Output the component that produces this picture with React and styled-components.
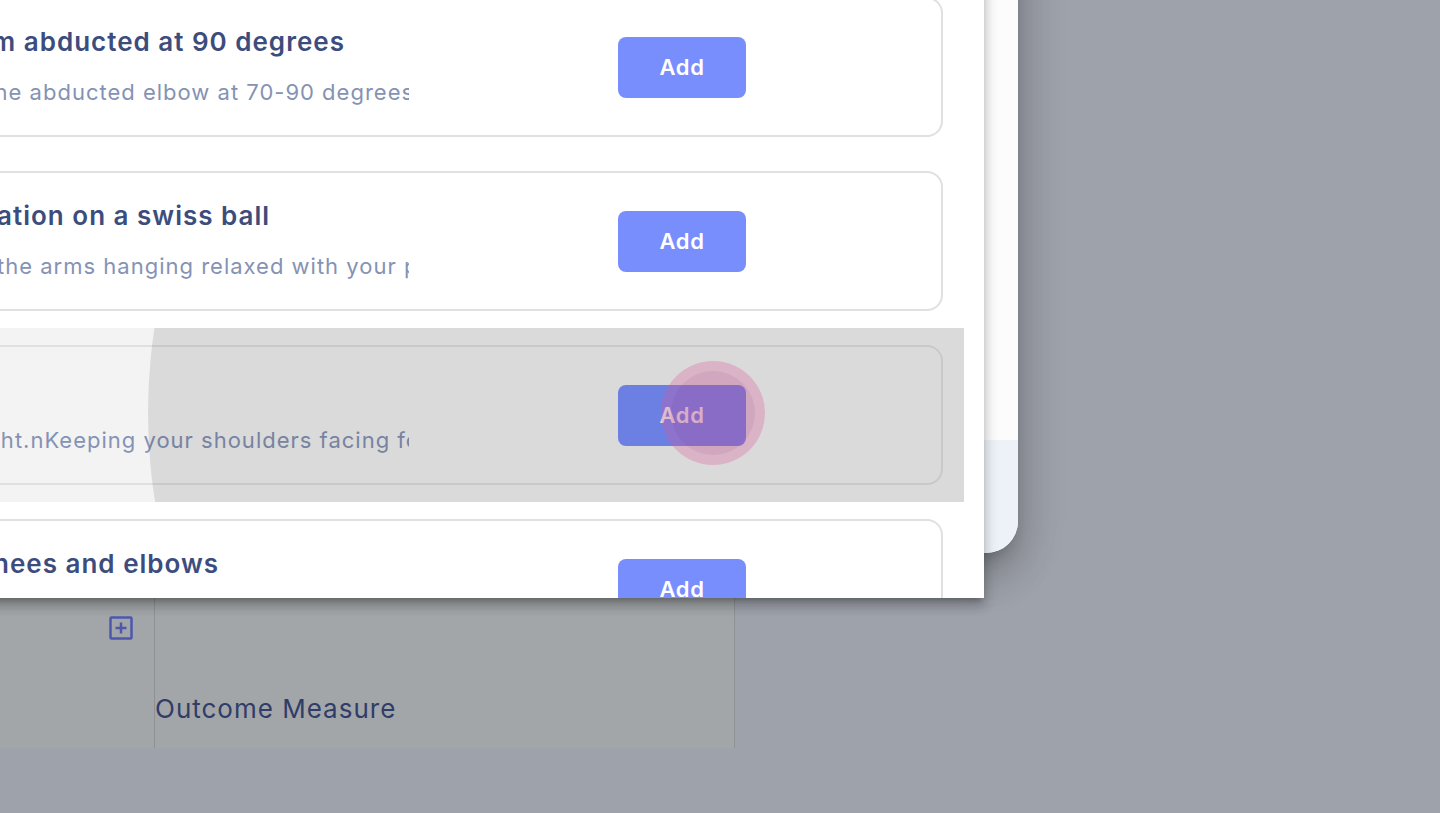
import React from 'react';
import styled, { createGlobalStyle } from 'styled-components';

const GlobalStyle = createGlobalStyle`
  html, body {
    margin: 0;
    padding: 0;
    background: #9ea2ab;
    font-family: Inter, "Noto Sans", "Liberation Sans", sans-serif;
  }
`;

const exercises = [
  {
    title: 'Rotation with arm abducted at 90 degrees',
    desc: 'Stay upright, with the abducted elbow at 70-90 degreesrnRotate the forearm up slowly',
  },
  {
    title: 'Seated trunk rotation on a swiss ball',
    desc: 'Sit on the ball with the arms hanging relaxed with your posture upright',
  },
  {
    title: 'Wall slide',
    desc: 'Stand tall and upright.nKeeping your shoulders facing forward',
  },
  {
    title: 'Cat stretch on knees and elbows',
    desc: 'Start on all fours with your back flat and relaxed',
  },
];

const App = () => {
  return (
    <>
      <GlobalStyle />
      <Stage>
        <BackPage>
          <TableRow>
            <IconCell>
              <PlusBox viewBox="0 0 24 24">
                <rect x="1.5" y="1.5" width="21" height="21" rx="1" />
                <path d="M12 6.5v11M6.5 12h11" />
              </PlusBox>
            </IconCell>
            <LabelCell>Outcome Measure</LabelCell>
          </TableRow>
        </BackPage>

        <Dialog>
          <DialogBody />
          <DialogFooter />
        </Dialog>

        <Popover>
          <List>
            {exercises.map((ex, i) => (
              <Item key={ex.title} $active={i === 2}>
                <Card>
                  <TextCol>
                    <Title>{ex.title}</Title>
                    <Desc>{ex.desc}</Desc>
                  </TextCol>
                  <AddButton>Add</AddButton>
                </Card>
                {i === 2 && <Ripple />}
              </Item>
            ))}
          </List>
        </Popover>

        <ClickMark>
          <ClickCore />
        </ClickMark>
      </Stage>
    </>
  );
};

const Stage = styled.div`
  position: relative;
  width: 1440px;
  height: 813px;
  overflow: hidden;
  background: #9ea2ab;
`;

const BackPage = styled.div`
  padding-top: 540px;
`;

const TableRow = styled.div`
  display: grid;
  grid-template-columns: 155px 580px;
  width: 735px;
  height: 208px;
  background: #a3a6a8;
`;

const IconCell = styled.div`
  display: flex;
  justify-content: flex-end;
  align-items: flex-start;
  padding: 76px 21px 0 0;
  border-right: 1.5px solid #8f9294;
`;

const PlusBox = styled.svg`
  width: 24px;
  height: 24px;
  fill: none;
  stroke: #4d58ad;
  stroke-width: 2.5;
`;

const LabelCell = styled.div`
  display: flex;
  align-items: flex-end;
  padding-bottom: 24px;
  border-right: 1.5px solid #8f9294;
  font-size: 26px;
  color: #2f3d68;
  letter-spacing: 1px;
`;

const Dialog = styled.div`
  position: absolute;
  left: -300px;
  top: -100px;
  width: 1318px;
  height: 653px;
  display: flex;
  flex-direction: column;
  border-radius: 32px;
  overflow: hidden;
  background: #ffffff;
  box-shadow: 0 11px 15px -7px rgba(0, 0, 0, 0.2),
    0 24px 38px 3px rgba(0, 0, 0, 0.14), 0 9px 46px 8px rgba(0, 0, 0, 0.12);
  z-index: 1;
`;

const DialogBody = styled.div`
  flex: 1;
  background: #fcfcfc;
`;

const DialogFooter = styled.div`
  height: 113px;
  background: #edf2f9;
`;

const Popover = styled.div`
  position: absolute;
  left: -300px;
  top: -20px;
  width: 1284px;
  height: 618px;
  overflow: hidden;
  background: #ffffff;
  box-shadow: 0 5px 5px -3px rgba(0, 0, 0, 0.2), 0 8px 10px 1px rgba(0, 0, 0, 0.14),
    0 3px 14px 2px rgba(0, 0, 0, 0.12);
  z-index: 2;
`;

const List = styled.div`
  display: flex;
  flex-direction: column;
  padding-right: 20px;
`;

const Item = styled.div`
  position: relative;
  overflow: hidden;
  padding: 17px 21px;
  background: ${(p) => (p.$active ? '#f3f3f3' : 'transparent')};
`;

const Card = styled.div`
  display: flex;
  align-items: center;
  height: 140px;
  box-sizing: border-box;
  padding-left: 56px;
  border: 2px solid #e0e0e0;
  border-radius: 16px;
`;

const TextCol = styled.div`
  flex: 0 0 630px;
  overflow: hidden;
  white-space: nowrap;
`;

const Title = styled.div`
  font-size: 26px;
  line-height: 32px;
  font-weight: 600;
  color: #3c4d7d;
  letter-spacing: 1px;
  margin-bottom: 18px;
`;

const Desc = styled.div`
  font-size: 22px;
  line-height: 32px;
  color: #8592b4;
  letter-spacing: 1px;
  overflow: hidden;
`;

const AddButton = styled.button`
  margin-left: 209px;
  width: 128px;
  height: 61px;
  border: none;
  border-radius: 8px;
  background: #798efd;
  color: #ffffff;
  font-family: inherit;
  font-size: 22px;
  font-weight: 600;
  letter-spacing: 0.6px;
`;

const Ripple = styled.span`
  position: absolute;
  left: 448px;
  top: -480px;
  width: 1130px;
  height: 1130px;
  border-radius: 50%;
  background: rgba(0, 0, 0, 0.1);
  pointer-events: none;
`;

const ClickMark = styled.div`
  position: absolute;
  left: 661px;
  top: 361px;
  width: 104px;
  height: 104px;
  border-radius: 50%;
  background: rgba(222, 88, 152, 0.3);
  display: flex;
  align-items: center;
  justify-content: center;
  z-index: 3;
  pointer-events: none;
`;

const ClickCore = styled.div`
  width: 84px;
  height: 84px;
  border-radius: 50%;
  background: rgba(90, 30, 110, 0.08);
`;

export default App;
